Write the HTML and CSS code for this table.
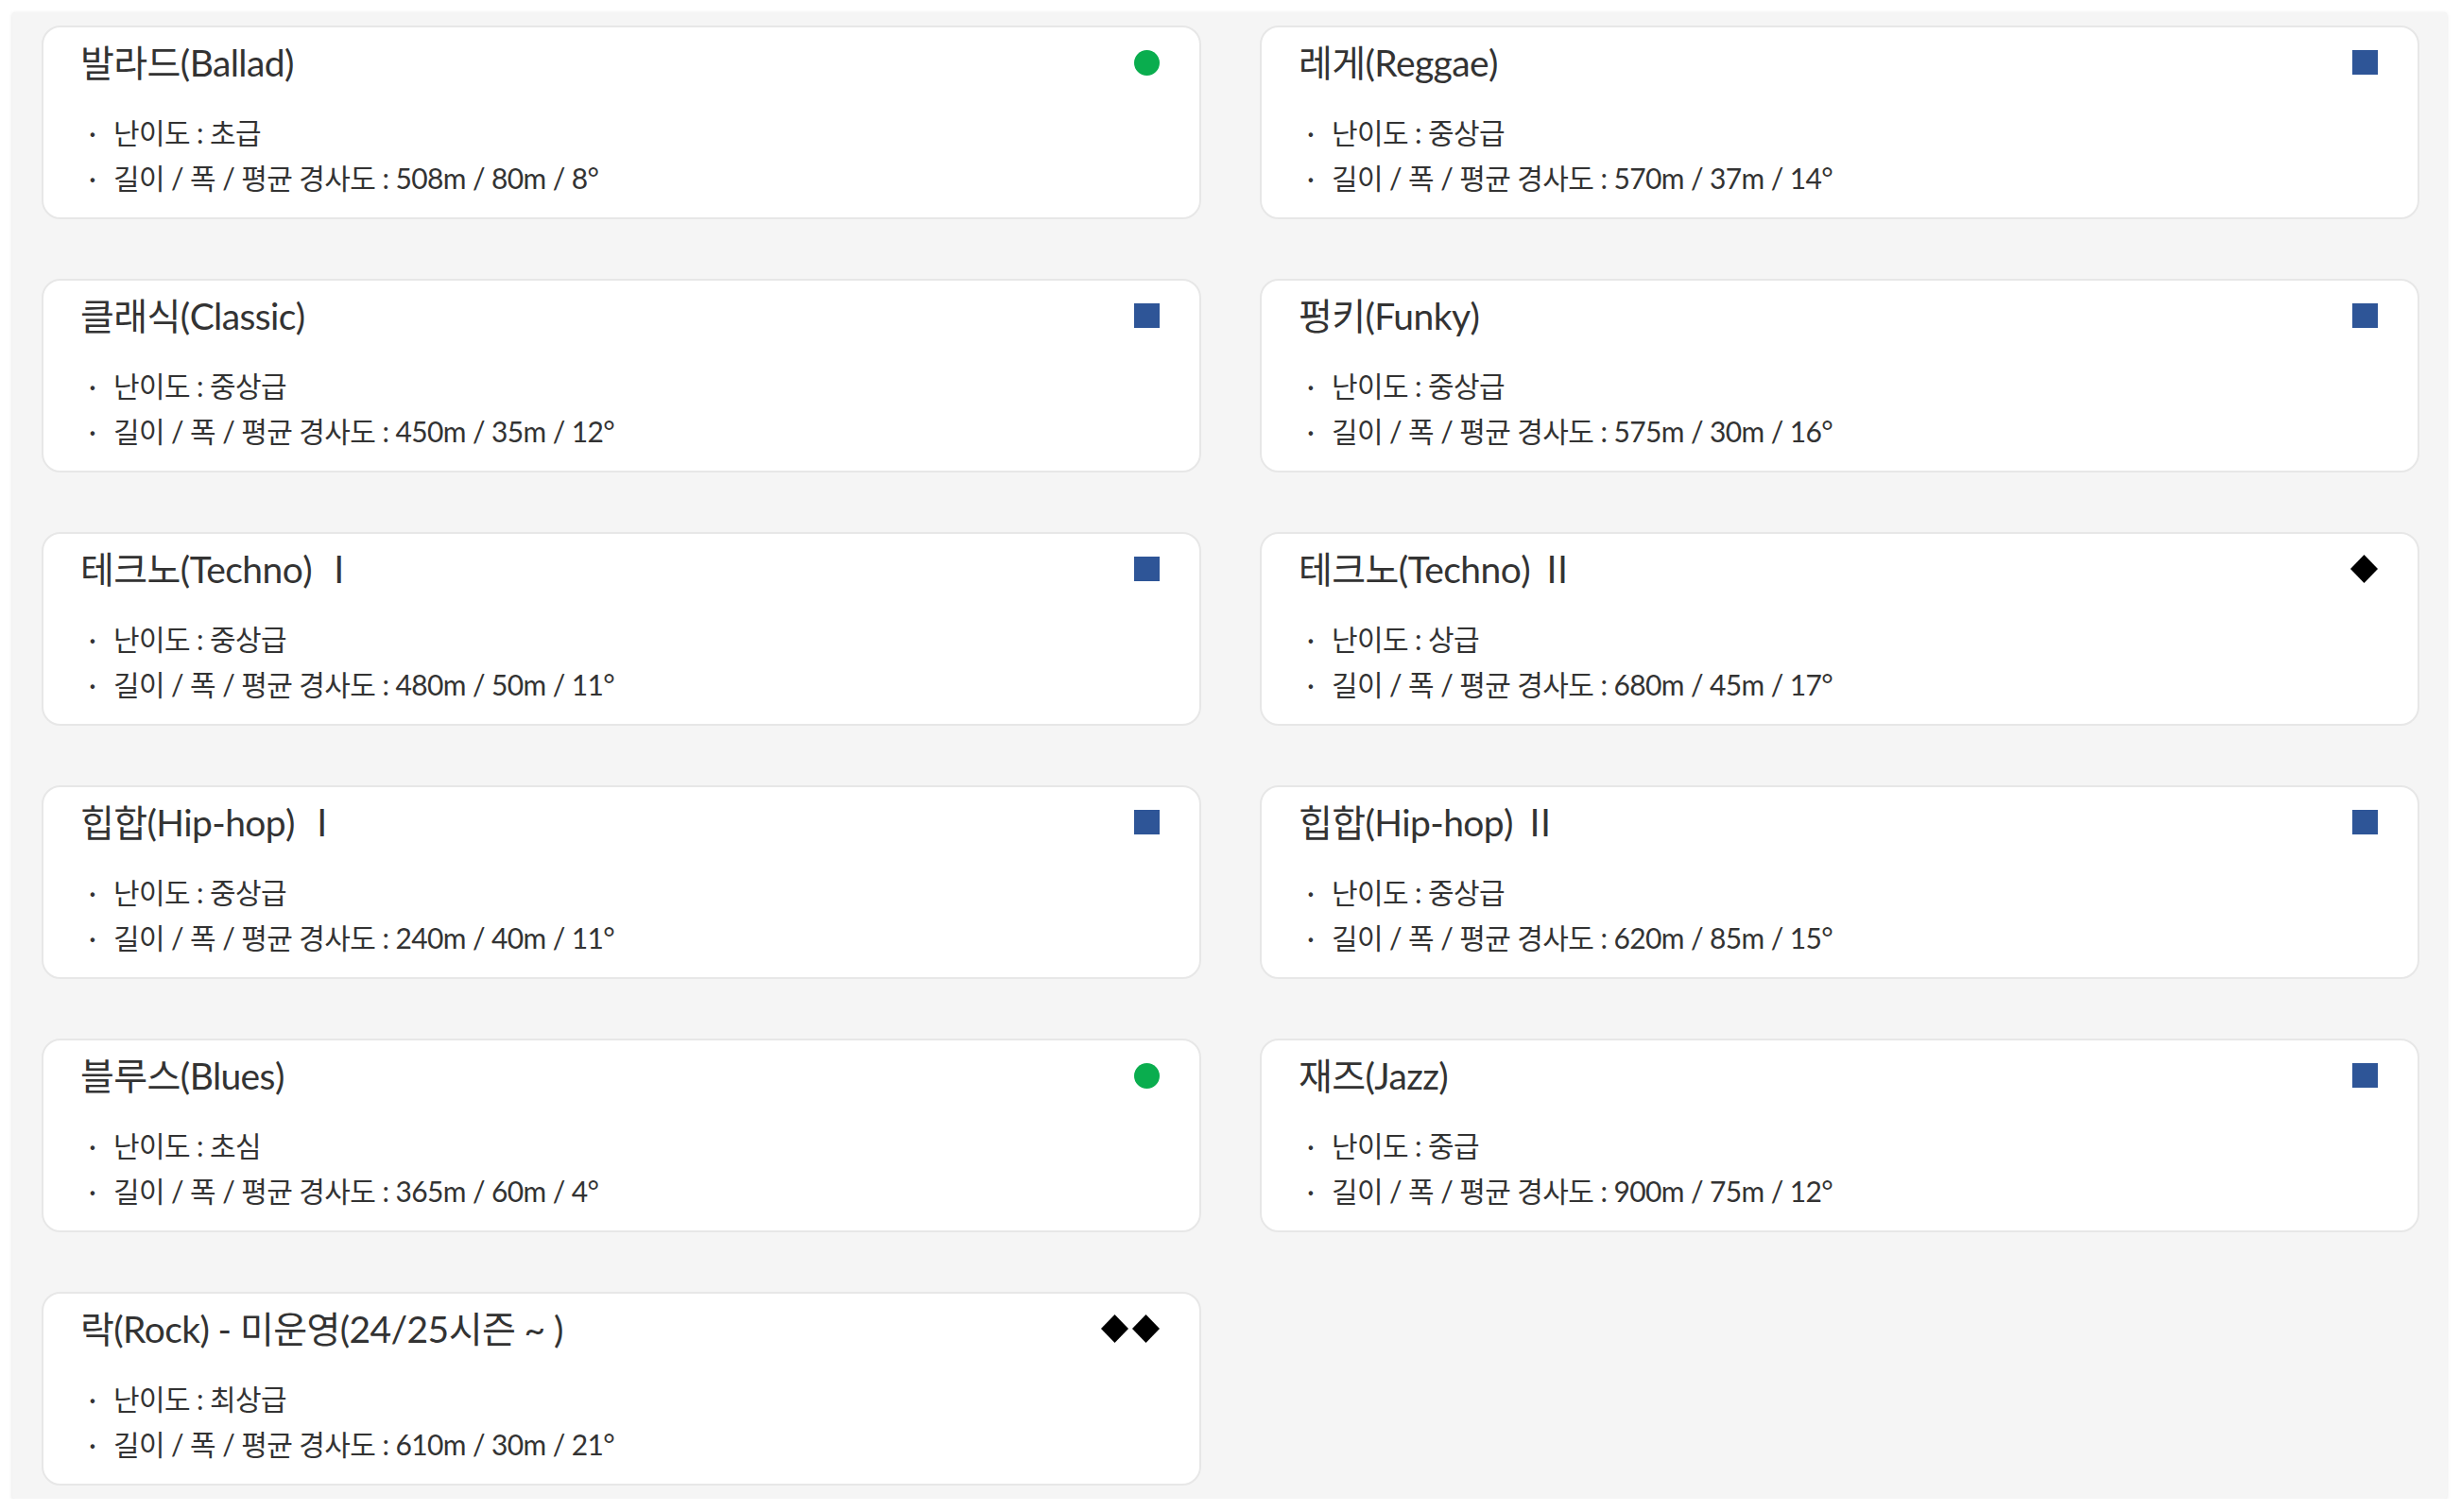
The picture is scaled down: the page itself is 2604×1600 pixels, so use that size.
FILE: index.html
```html
<!DOCTYPE html>
<html lang="ko">
<head>
<meta charset="utf-8">
<title>슬로프 안내</title>
<link rel="stylesheet" href="styles.css">
</head>
<body>
<div class="page">
  <div class="grid">
    <div class="card">
      <div class="card-head"><h3 class="title">발라드(Ballad)</h3><span class="ic circle"></span></div>
      <ul class="info"><li>난이도 : 초급</li><li>길이 / 폭 / 평균 경사도 : 508m / 80m / 8°</li></ul>
    </div>
    <div class="card">
      <div class="card-head"><h3 class="title">레게(Reggae)</h3><span class="ic square"></span></div>
      <ul class="info"><li>난이도 : 중상급</li><li>길이 / 폭 / 평균 경사도 : 570m / 37m / 14°</li></ul>
    </div>
    <div class="card">
      <div class="card-head"><h3 class="title">클래식(Classic)</h3><span class="ic square"></span></div>
      <ul class="info"><li>난이도 : 중상급</li><li>길이 / 폭 / 평균 경사도 : 450m / 35m / 12°</li></ul>
    </div>
    <div class="card">
      <div class="card-head"><h3 class="title">펑키(Funky)</h3><span class="ic square"></span></div>
      <ul class="info"><li>난이도 : 중상급</li><li>길이 / 폭 / 평균 경사도 : 575m / 30m / 16°</li></ul>
    </div>
    <div class="card">
      <div class="card-head"><h3 class="title">테크노(Techno) Ⅰ</h3><span class="ic square"></span></div>
      <ul class="info"><li>난이도 : 중상급</li><li>길이 / 폭 / 평균 경사도 : 480m / 50m / 11°</li></ul>
    </div>
    <div class="card">
      <div class="card-head"><h3 class="title">테크노(Techno) Ⅱ</h3><span class="ics"><span class="ic diamond"></span></span></div>
      <ul class="info"><li>난이도 : 상급</li><li>길이 / 폭 / 평균 경사도 : 680m / 45m / 17°</li></ul>
    </div>
    <div class="card">
      <div class="card-head"><h3 class="title">힙합(Hip-hop) Ⅰ</h3><span class="ic square"></span></div>
      <ul class="info"><li>난이도 : 중상급</li><li>길이 / 폭 / 평균 경사도 : 240m / 40m / 11°</li></ul>
    </div>
    <div class="card">
      <div class="card-head"><h3 class="title">힙합(Hip-hop) Ⅱ</h3><span class="ic square"></span></div>
      <ul class="info"><li>난이도 : 중상급</li><li>길이 / 폭 / 평균 경사도 : 620m / 85m / 15°</li></ul>
    </div>
    <div class="card">
      <div class="card-head"><h3 class="title">블루스(Blues)</h3><span class="ic circle"></span></div>
      <ul class="info"><li>난이도 : 초심</li><li>길이 / 폭 / 평균 경사도 : 365m / 60m / 4°</li></ul>
    </div>
    <div class="card">
      <div class="card-head"><h3 class="title">재즈(Jazz)</h3><span class="ic square"></span></div>
      <ul class="info"><li>난이도 : 중급</li><li>길이 / 폭 / 평균 경사도 : 900m / 75m / 12°</li></ul>
    </div>
    <div class="card">
      <div class="card-head"><h3 class="title">락(Rock) - 미운영(24/25시즌 ~ )</h3><span class="ics"><span class="ic diamond"></span><span class="ic diamond"></span></span></div>
      <ul class="info"><li>난이도 : 최상급</li><li>길이 / 폭 / 평균 경사도 : 610m / 30m / 21°</li></ul>
    </div>
  </div>
</div>
</body>
</html>
```

FILE: styles.css
```css
* { box-sizing: border-box; }

html, body {
  margin: 0;
  padding: 0;
  background: #ffffff;
}

body {
  font-family: Lato, "Noto Sans CJK KR", sans-serif;
  color: #333333;
}

.page {
  margin: 13px 15px 0 13px;
  height: 1573px;
  background: #f5f5f5;
  border-radius: 3px;
  box-shadow: 0 1px 4px rgba(0, 0, 0, 0.12);
  padding: 14px 29px 14px 31px;
}

.grid {
  display: grid;
  grid-template-columns: 1fr 1fr;
  column-gap: 62px;
  row-gap: 63px;
}

.card {
  height: 205px;
  background: #ffffff;
  border: 2px solid #e7e7e7;
  border-radius: 20px;
  padding: 15px 42px 0 39px;
}

.card-head {
  display: flex;
  align-items: center;
  justify-content: space-between;
  height: 44px;
}

.title {
  margin: 0;
  font-size: 39px;
  font-weight: 400;
  line-height: 44px;
  color: #333333;
  letter-spacing: -0.6px;
}

.ics {
  display: flex;
  gap: 4px;
}

.ic {
  display: block;
  width: 27px;
  height: 27px;
}

.circle {
  background: #0aad4e;
  border-radius: 50%;
}

.square {
  background: #2e5597;
  width: 27px;
  height: 26px;
}

.diamond {
  width: 29px;
  height: 30px;
  background: #000000;
  clip-path: polygon(50% 0, 100% 50%, 50% 100%, 0 50%);
}

.info {
  list-style: none;
  margin: 28px 0 0 0;
  padding: 0;
}

.info li {
  font-size: 30px;
  line-height: 48px;
  color: #333333;
  letter-spacing: -0.6px;
  white-space: nowrap;
}

.info li::before {
  content: "·";
  display: inline-block;
  width: 26px;
  padding-left: 9px;
}
```
